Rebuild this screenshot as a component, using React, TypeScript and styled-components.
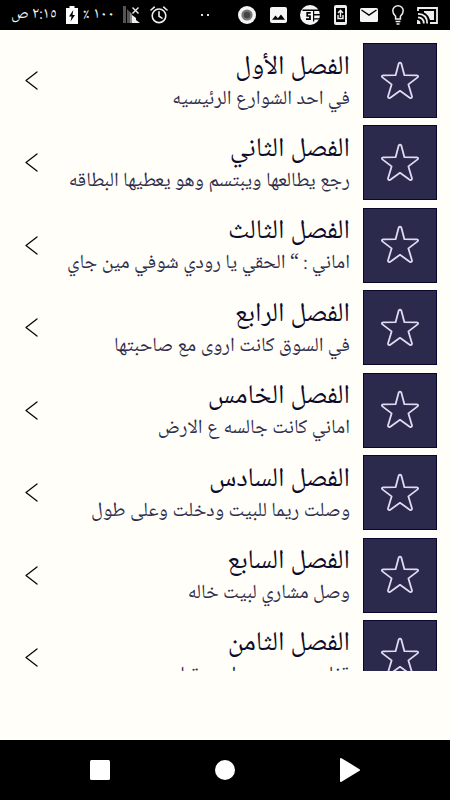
import React from "react";
import styled, { createGlobalStyle } from "styled-components";

const GlobalStyle = createGlobalStyle`
  *, *::before, *::after { box-sizing: border-box; }
  body {
    margin: 0;
    background: #fffef8;
    font-family: "Noto Naskh Arabic", "Noto Sans", "DejaVu Sans", sans-serif;
  }
`;

const Screen = styled.div`
  display: flex;
  flex-direction: column;
  height: 100vh;
  background: #fffef8;
`;

const StatusBar = styled.header`
  display: flex;
  align-items: center;
  justify-content: space-between;
  flex: none;
  height: 30px;
  padding: 0 12px 0 11px;
  background: #000;
  color: #f4f4f4;
`;

const StatusGroup = styled.div<{ $gap: number }>`
  display: flex;
  align-items: center;
  gap: ${(p) => p.$gap}px;
  svg { display: block; flex: none; }
`;

const NoticeGroup = styled.div`
  display: flex;
  align-items: center;
  justify-content: space-between;
  width: 200px;
  svg { display: block; flex: none; }
`;

const StatusText = styled.span`
  font-size: 16px;
  line-height: 20px;
  white-space: nowrap;
`;

const Dots = styled.span`
  display: flex;
  gap: 4px;
  margin-left: 24px;
  &::before, &::after {
    content: "";
    width: 2px;
    height: 2px;
    background: #ddd;
  }
`;

const Viewport = styled.main`
  flex: 1;
  min-height: 0;
  margin-bottom: 69px;
  overflow: hidden;
`;

const ChapterList = styled.ul`
  display: flex;
  flex-direction: column;
  justify-content: space-between;
  height: 665px;
  margin: 0;
  padding: 13px 13px 0;
  list-style: none;
`;

const Chapter = styled.button`
  display: flex;
  align-items: center;
  gap: 13px;
  width: 100%;
  height: 75px;
  padding: 0 0 0 12px;
  border: 0;
  background: none;
  color: #0d0b2b;
  font-family: inherit;
  text-align: right;
  cursor: pointer;
  svg { display: block; flex: none; }
`;

const Tile = styled.span`
  display: flex;
  align-items: center;
  justify-content: center;
  flex: none;
  width: 74px;
  height: 75px;
  border: 1px solid #09072d;
  background: #2c2a4c;
`;

const ChapterText = styled.span`
  display: flex;
  flex-direction: column;
  flex: 1;
  min-width: 0;
  padding-top: 2px;
  white-space: nowrap;
`;

const Title = styled.span`
  font-size: 27px;
  line-height: 36px;
`;

const Excerpt = styled.span`
  color: #2f2d4b;
  font-size: 20px;
  line-height: 28px;
`;

const NavBar = styled.nav`
  display: flex;
  align-items: center;
  justify-content: space-around;
  flex: none;
  height: 60px;
  padding: 0 38px;
  background: #000;
`;

const NavButton = styled.button`
  display: flex;
  align-items: center;
  justify-content: center;
  width: 48px;
  height: 48px;
  padding: 0;
  border: 0;
  background: none;
  cursor: pointer;
`;

const chapters = [
  { title: "الفصل الأول", excerpt: "في احد الشوارع الرئيسيه" },
  { title: "الفصل الثاني", excerpt: "رجع يطالعها ويبتسم وهو يعطيها البطاقه" },
  { title: "الفصل الثالث", excerpt: "اماني : “ الحقي يا رودي شوفي مين جاي" },
  { title: "الفصل الرابع", excerpt: "في السوق كانت اروى مع صاحبتها" },
  { title: "الفصل الخامس", excerpt: "اماني كانت جالسه ع الارض" },
  { title: "الفصل السادس", excerpt: "وصلت ريما للبيت ودخلت وعلى طول" },
  { title: "الفصل السابع", excerpt: "وصل مشاري لبيت خاله" },
  { title: "الفصل الثامن", excerpt: "قفلت من ريم وراحت تنام" },
];

const StarIcon = () => (
  <svg width="40" height="40" viewBox="0 0 40 40" fill="none" stroke="#dedbf0" strokeWidth="1.8" strokeLinejoin="round" aria-hidden="true">
    <path d="M18.7 2.6Q20 .6 21.3 2.6L24.4 14.2L36.8 14.4Q39 14.8 37.6 16.4L28.4 23.4L32 35.4Q32 37.6 30 36.9L20 29.8L10 36.9Q8 37.6 8 35.4L11.6 23.4L2.4 16.4Q1 14.8 3.2 14.4L15.6 14.2Z" />
  </svg>
);

const Chevron = () => (
  <svg width="13" height="19" viewBox="0 0 13 19" fill="none" stroke="#080808" strokeWidth="1.3" strokeLinecap="round" strokeLinejoin="round" aria-hidden="true">
    <path d="M12 1L1 9.5L12 18" />
  </svg>
);

const BatteryIcon = () => (
  <svg width="12" height="18" viewBox="0 0 12 18" aria-hidden="true">
    <path fill="#fff" d="M3.5 0h5v2H12v16H0V2h3.5z" />
    <path fill="#000" d="M7.3 4L3 10.5h2.6L4.5 15.5L9 9H6.5z" />
  </svg>
);

const SignalIcon = () => (
  <svg width="18" height="18" viewBox="0 0 18 18" aria-hidden="true">
    <path fill="#555" d="M0 0h3v17H0zM4 3l3 3v11H4z" />
    <path fill="#888" d="M7 6l2 2v9H7z" />
    <path fill="#eee" d="M9 9l4 3v2l4 3H9z" />
    <path stroke="#eee" strokeWidth="1.4" d="M9.5 1.5l6 6M15.5 1.5l-6 6" />
  </svg>
);

const AlarmIcon = () => (
  <svg width="18" height="18" viewBox="0 0 18 18" fill="none" stroke="#eee" strokeWidth="1.6" strokeLinecap="round" aria-hidden="true">
    <circle cx="9" cy="9.8" r="6.8" />
    <path d="M1 4L4.3 1.2M17 4L13.7 1.2M9 5.8v4.5l3 1.8" />
  </svg>
);

const RecordIcon = () => (
  <svg width="18" height="18" viewBox="0 0 18 18" aria-hidden="true">
    <circle cx="9" cy="9" r="9" fill="#f5f5f5" />
    <circle cx="9" cy="9" r="5.6" fill="#777" />
    <circle cx="9" cy="9" r="3.2" fill="#444" />
  </svg>
);

const PictureIcon = () => (
  <svg width="17" height="16" viewBox="0 0 17 16" aria-hidden="true">
    <rect width="17" height="16" rx="2" fill="#f5f5f5" />
    <path fill="#000" d="M2 12.7l3.5-4.2l2.4 2.7L11 7.5l4 5.2z" />
  </svg>
);

const NewsIcon = () => (
  <svg width="20" height="20" viewBox="0 0 20 20" aria-hidden="true">
    <circle cx="10" cy="10" r="10" fill="#f5f5f5" />
    <path fill="#000" d="M2.5 4.6H20v1.4H2.5zM14 9h6v1.4h-6zM14 13.2h6v1.4h-6zM13 5h1.2v11.4H13z" />
    <path fill="none" stroke="#000" strokeWidth="1.7" d="M10.8 7.9H7.2V11H10V14.2H6" />
  </svg>
);

const PhoneIcon = () => (
  <svg width="13" height="20" viewBox="0 0 13 20" aria-hidden="true">
    <rect width="13" height="20" rx="2" fill="#eee" />
    <path fill="#000" d="M2 3h9v14H2z" />
    <path fill="none" stroke="#eee" strokeWidth="1.4" d="M6.5 12V5.5M4 8l2.5-2.7L9 8M4 10v3.5h5V10" />
  </svg>
);

const MailIcon = () => (
  <svg width="18" height="14" viewBox="0 0 18 14" aria-hidden="true">
    <rect width="18" height="14" rx="1.5" fill="#f5f5f5" />
    <path d="M1.5 2L9 7L16.5 2" fill="none" stroke="#000" strokeWidth="1.5" />
  </svg>
);

const BulbIcon = () => (
  <svg width="12" height="20" viewBox="0 0 12 20" fill="none" stroke="#eee" strokeWidth="1.5" aria-hidden="true">
    <path d="M3.6 14V11.3Q.8 9 .8 5.8A5.2 5 0 0 1 11.2 5.8Q11.2 9 8.4 11.3V14zM3.6 16.5h4.8M4.5 19h3" />
  </svg>
);

const CastIcon = () => (
  <svg width="21" height="17" viewBox="0 0 21 17" fill="none" stroke="#eee" strokeWidth="1.8" aria-hidden="true">
    <path d="M1 4V1h19v15h-7M1 6.8Q10.2 7 10.2 16.5M1 10.3Q6.8 10.5 6.8 16.5" />
    <path fill="#eee" stroke="none" d="M7 4h10v9h-4Q11.5 7.5 7 5.5zM0 13q3.5 0 3.5 4H0z" />
  </svg>
);

export default function App() {
  return (
    <Screen>
      <GlobalStyle />
      <StatusBar>
        <StatusGroup $gap={9}>
          <StatusText dir="rtl">٢:١٥ ص</StatusText>
          <StatusGroup $gap={5}>
            <BatteryIcon />
            <StatusText dir="ltr">٪ ١٠٠</StatusText>
          </StatusGroup>
          <SignalIcon />
          <AlarmIcon />
          <Dots />
        </StatusGroup>
        <NoticeGroup>
          <RecordIcon />
          <PictureIcon />
          <NewsIcon />
          <PhoneIcon />
          <MailIcon />
          <BulbIcon />
          <CastIcon />
        </NoticeGroup>
      </StatusBar>
      <Viewport dir="rtl" lang="ar">
        <ChapterList>
          {chapters.map((chapter) => (
            <li key={chapter.title}>
              <Chapter type="button" dir="rtl">
                <Tile>
                  <StarIcon />
                </Tile>
                <ChapterText>
                  <Title>{chapter.title}</Title>
                  <Excerpt>{chapter.excerpt}</Excerpt>
                </ChapterText>
                <Chevron />
              </Chapter>
            </li>
          ))}
        </ChapterList>
      </Viewport>
      <NavBar>
        <NavButton type="button" aria-label="Recent apps">
          <svg width="20" height="20" viewBox="0 0 20 20"><rect width="20" height="20" rx="1.5" fill="#fff" /></svg>
        </NavButton>
        <NavButton type="button" aria-label="Home">
          <svg width="20" height="20" viewBox="0 0 20 20"><circle cx="10" cy="10" r="10" fill="#fff" /></svg>
        </NavButton>
        <NavButton type="button" aria-label="Back">
          <svg width="20" height="24" viewBox="0 0 20 24"><path d="M1 1L19 12L1 23z" fill="#fff" stroke="#fff" strokeWidth="2" strokeLinejoin="round" /></svg>
        </NavButton>
      </NavBar>
    </Screen>
  );
}
